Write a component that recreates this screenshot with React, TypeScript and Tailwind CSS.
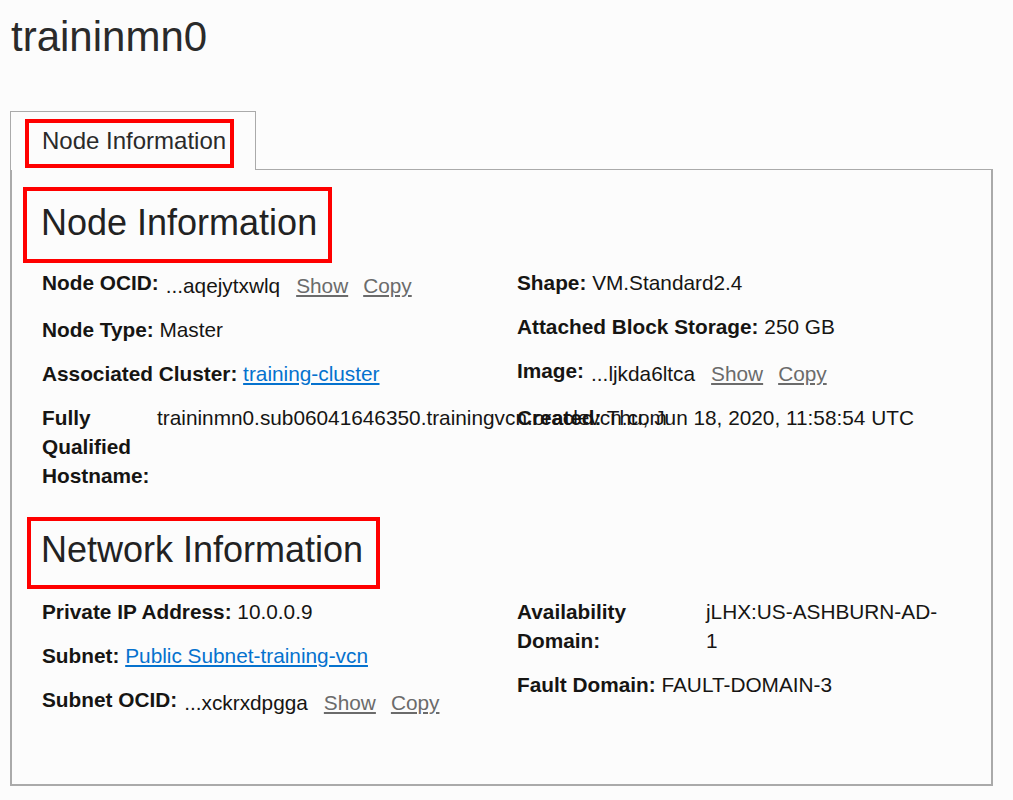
import React from "react";

const FONT = { fontFamily: '"Liberation Sans", Arial, sans-serif' };

function Copyable({ label, value }: { label: string; value: string }) {
  return (
    <div className="flex items-start">
      <span className="font-bold leading-[29px] shrink-0">{label}</span>
      <span className="pl-[7px] pt-[3px] leading-[29px] whitespace-nowrap">
        {value}
        <a className="ml-[16px] text-[#6b6b6b] underline cursor-pointer">Show</a>
        <a className="ml-[15px] text-[#6b6b6b] underline cursor-pointer">Copy</a>
      </span>
    </div>
  );
}

function Simple({ label, children }: { label: string; children: React.ReactNode }) {
  return (
    <div className="leading-[29px]">
      <span className="font-bold">{label}</span> {children}
    </div>
  );
}

function Table({
  label,
  value,
  labelW,
  valueCls,
}: {
  label: string;
  value: string;
  labelW: string;
  valueCls: string;
}) {
  return (
    <div className="flex items-start leading-[29px]">
      <div className={`font-bold shrink-0 ${labelW}`}>{label}</div>
      <div className={valueCls}>{value}</div>
    </div>
  );
}

const Link = ({ children }: { children: React.ReactNode }) => (
  <a className="text-[#0572ce] underline cursor-pointer">{children}</a>
);

export default function App() {
  return (
    <div className="min-h-[800px] bg-[#fcfcfc] pl-[10px] pt-[13px] text-[#161513]" style={FONT}>
      <h1 className="pl-[1px] text-[42px] leading-[48px] text-[#2a2a2a]">traininmn0</h1>

      <div className="mt-[50px] w-[983px]">
        <div className="flex h-[59px]">
          <div className="border-t border-l border-r border-[#aaaaaa] pl-[14px] pr-[21px] pt-[7px] pb-[2px]">
            <div className="border-[4px] border-[#ff0000] pl-[13px] pr-[4px] pt-[4px] pb-[9px] text-[24px] leading-[28px] text-[#2a2a2a] whitespace-nowrap">
              Node Information
            </div>
          </div>
          <div className="flex-1 border-b border-[#aaaaaa]" />
        </div>

        <div className="border-l-2 border-r-2 border-b-2 border-[#aaaaaa] pb-[67px] text-[20.8px]">
          <div className="ml-[11px] mt-[17px] inline-block border-[4px] border-[#ff0000] pl-[14px] pr-[11px] pt-[12px] pb-[16px] text-[36px] leading-[40px] text-[#222222] whitespace-nowrap">
            Node Information
          </div>

          <div className="mt-[5px] grid grid-cols-[475px_1fr] pl-[30px]">
            <div className="flex flex-col gap-[15px]">
              <Copyable label="Node OCID:" value="...aqejytxwlq" />
              <Simple label="Node Type:">Master</Simple>
              <Simple label="Associated Cluster:">
                <Link>training-cluster</Link>
              </Simple>
              <Table
                label="Fully Qualified Hostname:"
                value="traininmn0.sub06041646350.trainingvcn.oraclevcn.com"
                labelW="w-[115px]"
                valueCls="whitespace-nowrap"
              />
            </div>
            <div className="flex flex-col gap-[15px]">
              <Simple label="Shape:">VM.Standard2.4</Simple>
              <Simple label="Attached Block Storage:">250 GB</Simple>
              <Copyable label="Image:" value="...ljkda6ltca" />
              <Simple label="Created:">Thu, Jun 18, 2020, 11:58:54 UTC</Simple>
            </div>
          </div>

          <div className="ml-[15px] mt-[27px] inline-block border-[4px] border-[#ff0000] pl-[10px] pr-[13px] pt-[9px] pb-[15px] text-[36px] leading-[40px] text-[#222222] whitespace-nowrap">
            Network Information
          </div>

          <div className="mt-[8px] grid grid-cols-[475px_1fr] pl-[30px]">
            <div className="flex flex-col gap-[15px]">
              <Simple label="Private IP Address:">10.0.0.9</Simple>
              <Simple label="Subnet:">
                <Link>Public Subnet-training-vcn</Link>
              </Simple>
              <Copyable label="Subnet OCID:" value="...xckrxdpgga" />
            </div>
            <div className="flex flex-col gap-[15px]">
              <Table
                label="Availability Domain:"
                value="jLHX:US-ASHBURN-AD-1"
                labelW="w-[189px]"
                valueCls="w-[236px]"
              />
              <Simple label="Fault Domain:">FAULT-DOMAIN-3</Simple>
            </div>
          </div>
        </div>
      </div>
    </div>
  );
}
